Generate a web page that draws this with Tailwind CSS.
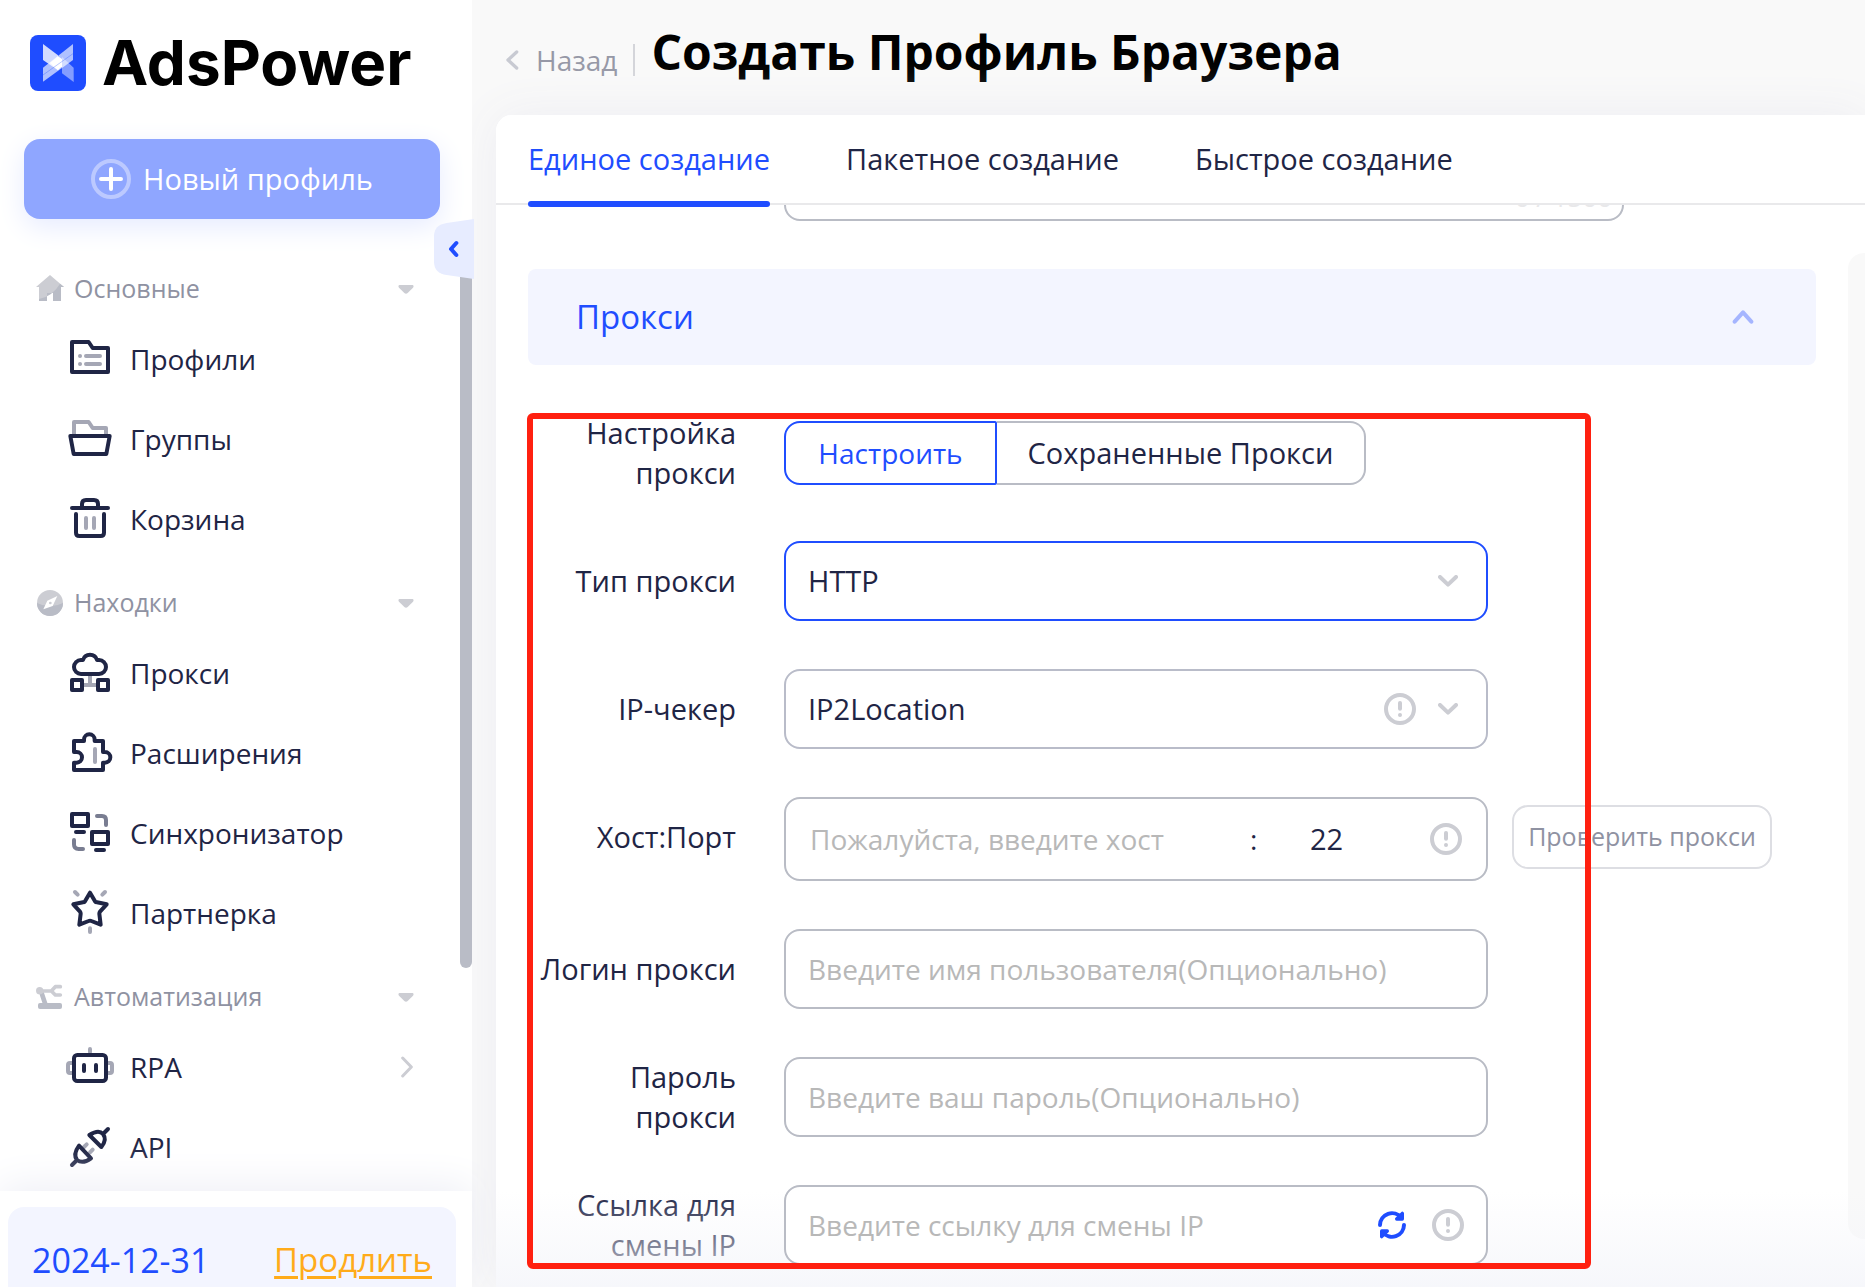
<!DOCTYPE html>
<html lang="ru">
<head>
<meta charset="utf-8">
<title>AdsPower</title>
<script src="https://cdn.jsdelivr.net/npm/@tailwindcss/browser@4"></script>
</head>
<body class="flex h-screen overflow-hidden bg-[#f9f9f9] font-['Open_Sans','Noto_Sans',sans-serif] text-[28px] text-[#1f2545]">

<svg class="hidden">
  <symbol id="info" viewBox="0 0 96 96"><circle cx="48" cy="48" r="42" fill="none" stroke="#cccdd3" stroke-width="12"/><path d="M48 30V47" stroke="#cccdd3" stroke-width="12" stroke-linecap="round"/><circle cx="48" cy="66" r="6" fill="#cccdd3"/></symbol>
  <symbol id="down" viewBox="0 0 60 36"><path d="M6 6L30 29L54 6" fill="none" stroke="#cccdd3" stroke-width="12" stroke-linecap="round" stroke-linejoin="round"/></symbol>
  <symbol id="caret" viewBox="0 0 48 27"><path d="M4 0H44Q49 3 45 8L29 24Q24 28 19 24L3 8Q-1 3 4 0Z" fill="#cccdd3"/></symbol>
</svg>

<!-- Sidebar -->
<aside class="relative flex w-[472px] shrink-0 flex-col bg-white">
  <div class="flex h-[139px] shrink-0 items-start gap-4 pt-[35px] pl-[30px]">
    <svg class="size-14 shrink-0" viewBox="0 0 168 168"><rect width="168" height="168" rx="24" fill="#1f4dff"/><path d="M39 27L84 61V106L39 75Z" fill="#fff" fill-opacity=".8"/><path d="M129 27V75L39 140V98Z" fill="#fff" fill-opacity=".65"/><path d="M96 66L131 98V141L96 115Z" fill="#fff" fill-opacity=".45"/><path d="M60 84L84 64L96 72V94L84 106Z" fill="#fff"/><path d="M39 120L129 56" stroke="#1f4dff" stroke-opacity=".3" stroke-width="3"/></svg>
    <span class="font-['Inter'] text-[62px] leading-14 font-bold text-black">AdsPower</span>
  </div>
  <button class="mr-8 ml-6 flex h-20 shrink-0 items-center justify-center gap-3 rounded-2xl bg-[#8fa6ff] text-white shadow-[0_8px_28px_#e6ebff]">
    <svg class="size-10" viewBox="0 0 120 120" fill="none" stroke="#fff"><circle cx="60" cy="60" r="54" stroke-width="12" stroke-opacity=".4"/><path d="M60 30V90M30 60H90" stroke-width="12" stroke-linecap="round"/></svg>
    <span class="text-[29px]">Новый профиль</span>
  </button>

  <nav class="flex min-h-0 flex-1 flex-col overflow-hidden pt-[27px]">
    <button class="flex h-[74px] shrink-0 items-center gap-[10px] pt-3 pr-[58px] pl-9 text-[25px] text-[#8f92a2]">
      <svg class="size-7" viewBox="0 0 84 84"><path d="M0 36L42 0L84 36H75V78H51V54H33V78H9V36Z" fill="#cccdd3"/><path d="M9 72Q50 64 72 26L84 36H75V78H51V54H33V78H9Z" fill="#b9bcc6"/></svg>
      <span>Основные</span><svg class="ml-auto h-[9px] w-4"><use href="#caret"/></svg>
    </button>
    <a href="#" class="flex h-20 shrink-0 items-center gap-4 pb-[2px] pl-[66px]">
      <svg class="size-12" viewBox="0 0 144 144" fill="none" stroke="#1f2545" stroke-width="12" stroke-linecap="round" stroke-linejoin="round"><path d="M18 21H68L80 39H126V111H18Z"/><path d="M42 63h.1M42 87h.1M60 63H102M60 87H102" stroke="#a5a7b5"/></svg>Профили</a>
    <a href="#" class="flex h-20 shrink-0 items-center gap-4 pb-[2px] pl-[66px]">
      <svg class="size-12" viewBox="0 0 144 144" fill="none" stroke="#1f2545" stroke-width="12" stroke-linecap="round" stroke-linejoin="round"><path d="M24 60V21H68L80 39H120V60" stroke="#a5a7b5"/><path d="M13 63H131L121 117H23Z"/></svg>Группы</a>
    <a href="#" class="flex h-20 shrink-0 items-center gap-4 pb-[2px] pl-[66px]">
      <svg class="size-12" viewBox="0 0 144 144" fill="none" stroke="#1f2545" stroke-width="12" stroke-linecap="round"><path d="M18 39H126M48 39V27Q48 15 60 15H84Q96 15 96 27V39M30 57V113Q30 123 40 123H104Q114 123 114 113V57"/><path d="M60 69V99M84 69V99" stroke="#a5a7b5"/></svg>Корзина</a>

    <button class="flex h-[74px] shrink-0 items-center gap-[10px] pt-3 pr-[58px] pl-9 text-[25px] text-[#8f92a2]">
      <svg class="size-7" viewBox="0 0 84 84"><circle cx="42" cy="42" r="39" fill="#cccdd3"/><path d="M3 42Q42 62 81 42A39 39 0 0 1 3 42Z" fill="#b9bcc6"/><path d="M64 21L50 51L22 61L34 35Z" fill="#fff"/><circle cx="43" cy="42" r="4" fill="#cccdd3"/></svg>
      <span>Находки</span><svg class="ml-auto h-[9px] w-4"><use href="#caret"/></svg>
    </button>
    <a href="#" class="flex h-20 shrink-0 items-center gap-4 pb-[2px] pl-[66px]">
      <svg class="size-12" viewBox="0 0 144 144" fill="none" stroke="#1f2545" stroke-width="12" stroke-linejoin="round"><path d="M72 78V108M54 108H90" stroke="#a5a7b5"/><path d="M45 75A21 21 0 0 1 45 33L51 33A22 22 0 0 1 93 33L99 33A21 21 0 0 1 99 75Z"/><path d="M18 93H48V123H18ZM96 93H126V123H96Z"/></svg>Прокси</a>
    <a href="#" class="flex h-20 shrink-0 items-center gap-4 pb-[2px] pl-[66px]">
      <svg class="size-12" viewBox="0 0 144 144" fill="none" stroke="#1f2545" stroke-width="12" stroke-linecap="round" stroke-linejoin="round"><path d="M24 36H54V32A16 16 0 0 1 86 32V36H111V69H117A16 16 0 0 1 117 101H111V123H24V101H32A16 16 0 0 0 32 69H24Z"/><path d="M87 60V99" stroke="#a5a7b5"/></svg>Расширения</a>
    <a href="#" class="flex h-20 shrink-0 items-center gap-4 pb-[2px] pl-[66px]">
      <svg class="size-12" viewBox="0 0 144 144" fill="none" stroke="#1f2545" stroke-width="12" stroke-linecap="round" stroke-linejoin="round"><path d="M18 15H66V51H18ZM30 69H54M78 69H126V105H78ZM90 123H114"/><path d="M93 21H108Q120 21 120 33V48M24 93V106Q24 120 38 120H51" stroke="#797d91"/></svg>Синхронизатор</a>
    <a href="#" class="flex h-20 shrink-0 items-center gap-4 pb-[2px] pl-[66px]">
      <svg class="size-12" viewBox="0 0 144 144" fill="none" stroke="#1f2545" stroke-width="12" stroke-linecap="round" stroke-linejoin="round"><path d="M72 11L87 37Q89 40 93 40L122 46L102 68Q100 71 100 74L104 107L76 96Q72 94 68 96L40 107L44 74Q44 71 42 68L22 46L51 40Q55 40 57 37Z"/><path d="M27 9L35 17M117 9L109 17M72 118V129" stroke="#a5a7b5"/></svg>Партнерка</a>

    <button class="flex h-[74px] shrink-0 items-center gap-[10px] pt-3 pr-[58px] pl-9 text-[25px] text-[#8f92a2]">
      <svg class="size-7" viewBox="0 0 84 84" fill="none" stroke-linecap="round" stroke-linejoin="round"><path d="M16 28L28 64" stroke="#b9bcc6" stroke-width="14"/><path d="M10 24H46L58 11H73M46 24L58 36H73" stroke="#cccdd3" stroke-width="11"/><circle cx="11" cy="23" r="11" fill="#cccdd3"/><rect x="6" y="60" width="72" height="18" rx="6" fill="#b9bcc6"/></svg>
      <span>Автоматизация</span><svg class="ml-auto h-[9px] w-4"><use href="#caret"/></svg>
    </button>
    <a href="#" class="flex h-20 shrink-0 items-center gap-4 pr-[58px] pb-[2px] pl-[66px]">
      <svg class="size-12" viewBox="0 0 144 144" fill="none" stroke="#1f2545" stroke-width="12" stroke-linecap="round"><path d="M72 18V28M20 60H12Q6 60 6 66V84Q6 90 12 90H20M124 60H132Q138 60 138 66V84Q138 90 132 90H124" stroke="#a5a7b5"/><rect x="24" y="36" width="96" height="78" rx="10"/><path d="M54 66V84M90 66V84"/></svg>RPA
      <svg class="ml-auto h-[22px] w-[14px]" viewBox="0 0 42 66" fill="none" stroke="#cccdd3" stroke-width="9" stroke-linecap="round" stroke-linejoin="round"><path d="M8 6L34 33L8 60"/></svg></a>
    <a href="#" class="flex h-20 shrink-0 items-center gap-4 pb-[2px] pl-[66px]">
      <svg class="size-12" viewBox="0 0 144 144" fill="none" stroke="#1f2545" stroke-width="12" stroke-linecap="round" stroke-linejoin="round"><path d="M62 64L54 72M80 80L72 88" stroke="#a5a7b5"/><path d="M126 18L111 33M70 36Q98 18 111 33Q124 50 106 72ZM39 68Q20 94 33 111Q50 124 75 106ZM18 126L33 111"/></svg>API</a>
  </nav>

  <div class="relative shrink-0 bg-white px-2 pt-4 shadow-[0_-6px_40px_#eeeff6]">
    <div class="mr-2 flex h-20 items-center justify-between rounded-t-2xl bg-[#f3f5ff] px-6 pt-[26px] text-[33px]">
      <span class="text-[34px] text-[#1f4dff]">2024-12-31</span>
      <a href="#" class="text-[#ffab1a] underline decoration-[3px] underline-offset-4">Продлить</a>
    </div>
  </div>

  <div class="absolute top-[240px] right-0 h-[728px] w-3 rounded-full bg-[#b9bcc6]"></div>
  <button aria-label="Свернуть меню" class="absolute top-[219px] -right-[2px] z-10 h-[60px] w-10">
    <svg class="size-full" viewBox="0 0 120 180"><path d="M120 0V180L38 168Q0 162 0 128V52Q0 18 38 12Z" fill="#e7ecff"/><path d="M67 72L51 90L67 108" fill="none" stroke="#1f4dff" stroke-width="12" stroke-linecap="round" stroke-linejoin="round"/></svg>
  </button>
</aside>

<!-- Main area -->
<main class="relative flex min-w-0 flex-1 flex-col overflow-hidden pl-6">
  <header class="flex h-[115px] shrink-0 items-center pb-3 pl-2">
    <a href="#" class="flex items-center gap-4 pt-4 text-[#9698a6]">
      <svg class="h-5 w-4" viewBox="0 0 48 60" fill="none" stroke="#c8cad2" stroke-width="10" stroke-linecap="round" stroke-linejoin="round"><path d="M38 6L12 30L38 54"/></svg>
      <span>Назад</span></a>
    <span class="mt-4 mr-4 ml-4 h-8 w-[2px] bg-[#d4d5da]"></span>
    <h1 class="text-[48px] font-bold text-black">Создать Профиль Браузера</h1>
  </header>

  <section class="relative flex min-h-0 flex-1 flex-col rounded-tl-2xl bg-white shadow-[0_0_48px_#ededf2]">
    <div class="relative z-10 flex h-[90px] shrink-0 gap-[76px] rounded-tl-2xl border-b-2 border-[#e9e9eb] bg-white pl-8 text-[29px]">
      <button class="relative text-[#1f4dff]">Единое создание<span class="absolute inset-x-0 -bottom-1 h-[6px] rounded-full bg-[#1f4dff]"></span></button>
      <button>Пакетное создание</button>
      <button>Быстрое создание</button>
    </div>

    <div class="flex min-h-0 flex-1 overflow-hidden pl-8">
      <form class="-mt-[104px] min-w-0 flex-1">
        <div class="relative ml-64 w-[840px]">
          <textarea aria-label="Примечание" class="block h-[120px] w-full resize-none rounded-2xl border-2 border-[#b9bcc5]"></textarea>
          <span class="absolute right-3 bottom-2 text-[26px] leading-8 text-[#e8e8ea]">0 / 1500</span>
        </div>

        <button type="button" class="mt-12 flex h-24 w-full items-center justify-between rounded-lg bg-[#f3f5ff] pr-[62px] pl-12 text-[33px] text-[#1f4dff]">Прокси
          <svg class="h-4 w-[22px]" viewBox="0 0 66 48" fill="none" stroke="#a5b5ff" stroke-width="12" stroke-linecap="round" stroke-linejoin="round"><path d="M8 38L33 10L58 38"/></svg>
        </button>

        <div class="relative mt-12 flex flex-col gap-12">
          <div class="flex items-center gap-12">
            <span class="w-52 pl-14 text-right text-[29px] leading-10">Настройка прокси</span>
            <div class="flex h-16">
              <button type="button" class="relative w-[213px] rounded-l-2xl rounded-r-xs border-2 border-[#1f4dff] text-[#1f4dff]">Настроить</button>
              <button type="button" class="w-[369px] rounded-r-2xl border-2 border-l-0 border-[#b9bcc5] text-[29px]">Сохраненные Прокси</button>
            </div>
          </div>

          <div class="flex items-center gap-12">
            <label for="type" class="w-52 text-right text-[29px] leading-10">Тип прокси</label>
            <div class="relative w-[704px]">
              <select id="type" class="block h-20 w-full appearance-none rounded-2xl border-2 border-[#1f4dff] bg-white px-[22px] text-[29px]"><option>HTTP</option></select>
              <svg class="pointer-events-none absolute top-[34px] right-[30px] h-3 w-5"><use href="#down"/></svg>
            </div>
          </div>

          <div class="flex items-center gap-12">
            <label for="checker" class="w-52 text-right text-[29px] leading-10">IP-чекер</label>
            <div class="relative w-[704px]">
              <select id="checker" class="block h-20 w-full appearance-none rounded-2xl border-2 border-[#b9bcc9] bg-white px-[22px] text-[29px]"><option>IP2Location</option></select>
              <svg class="pointer-events-none absolute top-6 right-[72px] size-8"><use href="#info"/></svg>
              <svg class="pointer-events-none absolute top-[34px] right-[30px] h-3 w-5"><use href="#down"/></svg>
            </div>
          </div>

          <div class="flex items-center gap-12">
            <label for="host" class="w-52 pb-1 text-right text-[29px] leading-10">Хост:Порт</label>
            <div class="flex items-start gap-6">
              <div class="flex h-[84px] w-[704px] items-center rounded-2xl border-2 border-[#b9bcc5] pr-6 pl-6">
                <input id="host" class="w-[440px] placeholder:text-[#b8b8b8]" placeholder="Пожалуйста, введите хост">
                <span class="w-[60px]">:</span>
                <input aria-label="Порт" value="22" class="w-[80px] text-[29px]">
                <svg class="ml-auto size-8"><use href="#info"/></svg>
              </div>
              <button type="button" class="mt-2 h-16 w-[260px] rounded-2xl border-2 border-[#dddee3] text-[25px] whitespace-nowrap text-[#8f92a2]">Проверить прокси</button>
            </div>
          </div>

          <div class="flex items-center gap-12">
            <label for="login" class="w-52 text-right text-[29px] leading-10 whitespace-nowrap">Логин прокси</label>
            <input id="login" class="h-20 w-[704px] rounded-2xl border-2 border-[#b9bcc5] px-[22px] placeholder:text-[#b8b8b8]" placeholder="Введите имя пользователя(Опционально)">
          </div>

          <div class="flex items-center gap-12">
            <label for="password" class="w-52 pl-20 text-right text-[29px] leading-10">Пароль прокси</label>
            <input id="password" type="password" class="h-20 w-[704px] rounded-2xl border-2 border-[#b9bcc5] px-[22px] placeholder:text-[#b8b8b8]" placeholder="Введите ваш пароль(Опционально)">
          </div>

          <div class="flex items-center gap-12">
            <label for="link" class="w-52 text-right text-[29px] leading-10">Ссылка для смены IP</label>
            <div class="relative z-10 w-[704px]">
              <input id="link" class="block h-20 w-full rounded-2xl border-2 border-[#b9bcc5] bg-white px-[22px] placeholder:text-[#b8b8b8]" placeholder="Введите ссылку для смены IP">
              <button type="button" aria-label="Обновить" class="absolute top-[26px] right-[82px] size-7"><svg class="size-full" viewBox="0 0 84 84" fill="none" stroke="#1f4dff" stroke-width="12" stroke-linecap="round" stroke-linejoin="round"><path d="M6 42A36 36 0 0 1 70 20M78 42A36 36 0 0 1 14 64"/><path d="M73 7V24H56ZM11 77V60H28Z" fill="#1f4dff" stroke-width="10"/></svg></button>
              <svg class="pointer-events-none absolute top-6 right-6 size-8"><use href="#info"/></svg>
            </div>
          </div>

          <!-- Highlight frame around the proxy settings -->
          <div class="pointer-events-none absolute top-0 -left-px z-20 h-[856px] w-[1064px] rounded-md border-6 border-[#ff2010]"></div>
        </div>
      </form>
      <div class="mt-12 mb-12 ml-8 w-[17px] shrink-0 rounded-l-2xl bg-[#f9f9f9]"></div>
    </div>
    <div class="pointer-events-none absolute inset-x-0 bottom-0 h-24 bg-linear-to-t from-[#f4f5fa]/80 to-transparent"></div>
  </section>
</main>
</body>
</html>
